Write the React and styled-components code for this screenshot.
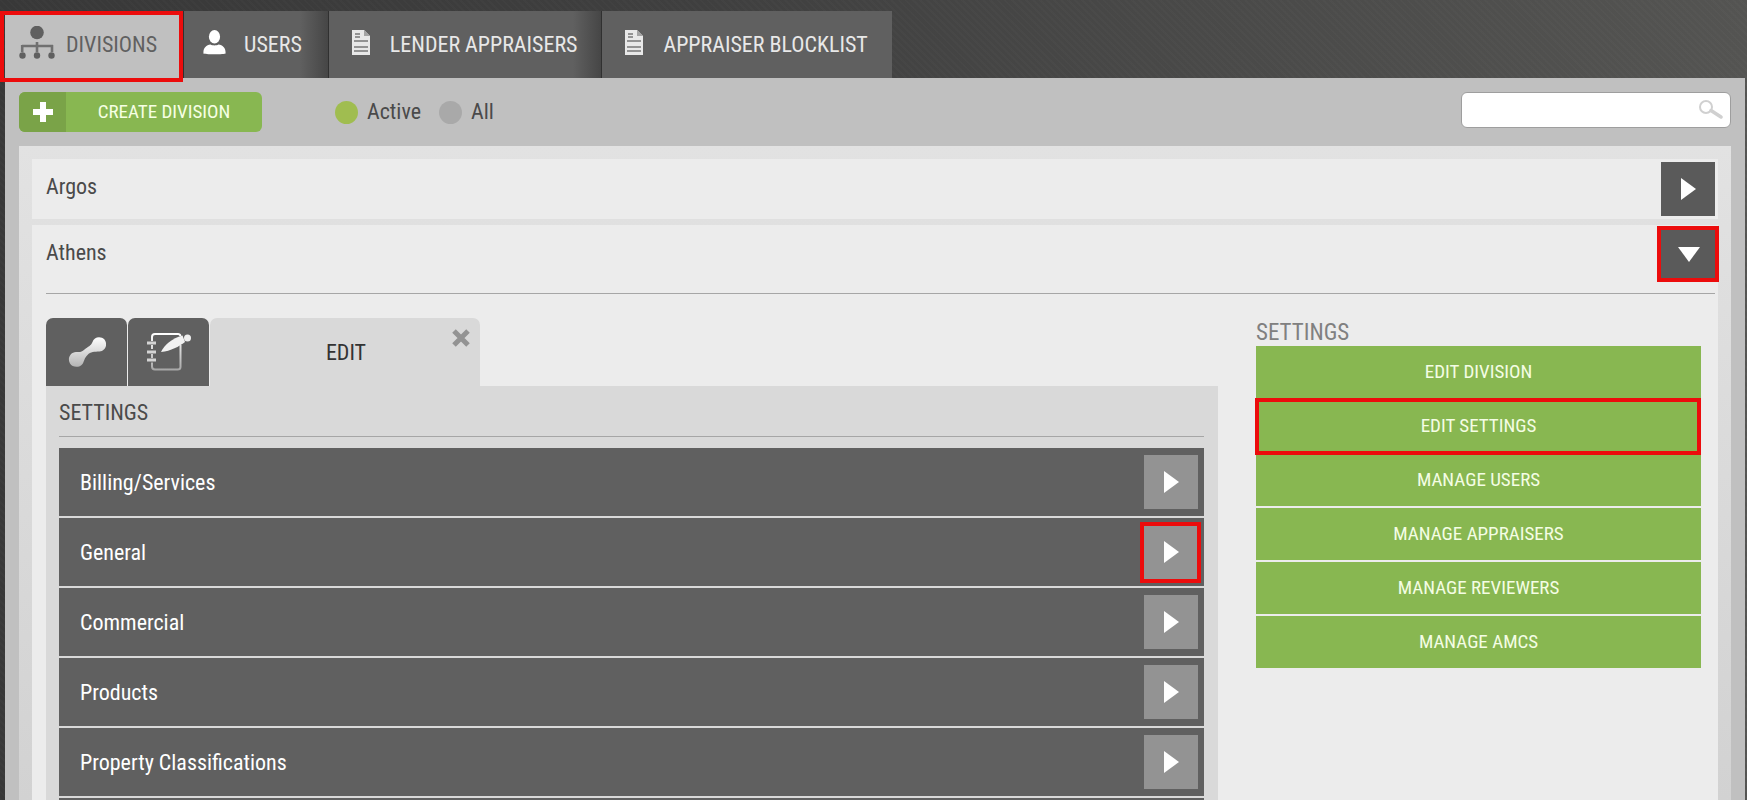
import React, { useState } from "react";
import styled, { createGlobalStyle, css } from "styled-components";

const GlobalStyle = createGlobalStyle`
  *, *::before, *::after { box-sizing: border-box; }
  body {
    margin: 0;
    background: #3a3a3a;
    font-family: "Roboto Condensed", "Liberation Sans Narrow", Roboto, sans-serif;
    font-size: 22px;
    line-height: 28px;
    color: #4a4a4a;
  }
  button, input { font: inherit; }
  button { border: 0; padding: 0; cursor: pointer; }
  h2 { margin: 0; font-weight: 400; }
`;

const highlight = css`
  position: relative;
  &::after {
    content: "";
    position: absolute;
    inset: ${(p) => p.$ring || "-4px"};
    border: 4px solid #ec0c0c;
    pointer-events: none;
    z-index: 2;
  }
`;

const Page = styled.div`
  display: flex;
  flex-direction: column;
  height: 100vh;
  overflow: hidden;
  padding: 11px 2px 0 5px;
  background:
    repeating-linear-gradient(45deg, rgba(255, 255, 255, 0.015) 0 2px, transparent 2px 5px),
    linear-gradient(90deg, #383838, #3f3f3f 40%, #545452);
`;

const Tabs = styled.nav`
  display: flex;
  height: 67px;
  flex: none;
`;

const Tab = styled.button`
  display: flex;
  align-items: center;
  gap: 20px;
  padding: 0 24px 0 23px;
  color: #e8e8e8;
  background: ${(p) => (p.$shade ? "linear-gradient(90deg, #606060 calc(100% - 28px), #464646)" : "#606060")};
  border-left: 1px solid #303030;
  white-space: nowrap;
  ${(p) =>
    p.$compact &&
    css`
      gap: 18px;
      padding: 0 26px 0 19px;
    `}
  ${(p) =>
    p.$active &&
    css`
      ${highlight}
      color: #606060;
      background: #c0c0c0;
      border-left: 0;
      padding: 0 26px 0 14px;
      gap: 11px;
    `}
  svg { flex: none; margin-bottom: 4px; }
`;

const Shell = styled.main`
  display: flex;
  flex-direction: column;
  flex: 1;
  min-height: 0;
  padding: 14px 14px 0;
  background: #c0c0c0;
`;

const Toolbar = styled.div`
  display: flex;
  align-items: flex-start;
  height: 54px;
  flex: none;
`;

const CreateButton = styled.button`
  display: flex;
  width: 243px;
  height: 40px;
  border-radius: 6px;
  overflow: hidden;
  color: #f6ffe4;
  background: #88b751;
  font-size: 19px;
  line-height: 40px;
`;

const CreateIcon = styled.span`
  display: flex;
  align-items: center;
  justify-content: center;
  width: 47px;
  height: 40px;
  background: #7aa348;
`;

const CreateLabel = styled.span`
  flex: 1;
`;

const Filters = styled.div`
  display: flex;
  gap: 18px;
  margin-left: 73px;
`;

const FilterLabel = styled.label`
  display: flex;
  align-items: center;
  gap: 9px;
  height: 40px;
`;

const Radio = styled.input`
  appearance: none;
  width: 23px;
  height: 23px;
  margin: 0;
  border-radius: 50%;
  background: #a9a9a9;
  &:checked { background: #a0bd50; }
`;

const SearchBox = styled.div`
  display: flex;
  align-items: center;
  width: 270px;
  height: 36px;
  margin-left: auto;
  padding-right: 7px;
  border: 1px solid #9e9e9e;
  border-radius: 6px;
  background: #fff;
`;

const SearchInput = styled.input`
  flex: 1;
  min-width: 0;
  height: 100%;
  padding: 0 8px;
  border: 0;
  outline: 0;
  background: transparent;
`;

const Panel = styled.div`
  display: flex;
  flex-direction: column;
  flex: 1;
  gap: 6px;
  min-height: 0;
  padding: 13px 13px 0;
  background: linear-gradient(#e2e2e2, #d2d2d2);
`;

const Division = styled.section`
  flex: ${(p) => (p.$open ? "1" : "none")};
  min-height: 0;
  padding: 3px 3px 3px 14px;
  background: #ececec;
`;

const DivisionHead = styled.div`
  display: flex;
  justify-content: space-between;
  height: ${(p) => (p.$open ? "66px" : "54px")};
  border-bottom: ${(p) => (p.$open ? "1px solid #a6a6a6" : "0")};
`;

const DivisionName = styled.span`
  padding-top: 11px;
`;

const ArrowButton = styled.button`
  display: flex;
  align-items: center;
  justify-content: center;
  flex: none;
  width: 54px;
  height: 54px;
  color: #fff;
  background: ${(p) => (p.$light ? "#939393" : "#5a5a5a")};
  ${(p) => p.$marked && highlight}
`;

const Columns = styled.div`
  display: grid;
  grid-template-columns: minmax(0, 1172fr) minmax(0, 445fr);
  gap: 38px;
  padding: 24px 14px 0 0;
`;

const SubTabs = styled.div`
  display: flex;
  gap: 1px;
  height: 68px;
`;

const IconTab = styled.button`
  display: flex;
  align-items: center;
  justify-content: center;
  width: 81px;
  border-radius: 7px 7px 0 0;
  background: #606060;
`;

const EditTab = styled.div`
  display: grid;
  grid-template-columns: 40px 1fr 38px;
  width: 270px;
  border-radius: 7px 7px 0 0;
  background: #d9d9d9;
  color: #333;
  text-align: center;
  line-height: 70px;
`;

const EditLabel = styled.span`
  grid-column: 2;
`;

const CloseButton = styled.button`
  display: flex;
  align-items: center;
  justify-content: center;
  width: 38px;
  height: 40px;
  background: transparent;
`;

const SettingsPanel = styled.div`
  padding: 12px 14px 0 13px;
  background: #d9d9d9;
`;

const PanelTitle = styled.h2`
  height: 39px;
  margin-bottom: 11px;
  border-bottom: 1px solid #a6a6a6;
  font-size: 22px;
  line-height: 30px;
`;

const Rows = styled.div`
  display: flex;
  flex-direction: column;
  gap: 2px;
`;

const Row = styled.div`
  display: flex;
  align-items: center;
  justify-content: space-between;
  height: 68px;
  padding: 0 6px 0 21px;
  background: #606060;
  color: #fff;
`;

const RowLabel = styled.span`
  padding-top: 1px;
`;

const SideTitle = styled.h2`
  padding-top: 1px;
  color: #808080;
  font-size: 23px;
  line-height: 27px;
`;

const Actions = styled.div`
  display: flex;
  flex-direction: column;
  gap: 2px;
`;

const ActionButton = styled.button`
  height: 52px;
  color: #f4fde4;
  background: #88b751;
  font-size: 19px;
  ${(p) => p.$marked && highlight}
`;

const Divisions = () => (
  <svg width="36" height="34" viewBox="0 0 36 34" fill="#606060">
    <circle cx="18" cy="6.5" r="6.8" />
    <path d="M3 20h31M3.2 19v7M18 16v10M33 19v7" stroke="#707070" strokeWidth="2.6" fill="none" />
    <circle cx="3.5" cy="29.5" r="3.2" />
    <circle cx="18" cy="29.5" r="3.2" />
    <circle cx="32.5" cy="29.5" r="3.2" />
  </svg>
);

const User = () => (
  <svg width="23" height="25" viewBox="0 0 23 25" fill="#fff">
    <ellipse cx="11.5" cy="6.8" rx="5.6" ry="6.8" />
    <path d="M.5 23.5c-.6-5 2.5-8.5 7-9 2 1.2 6 1.2 8 0 4.5.5 7.6 4 7 9 0 1-22 1-22 0z" />
  </svg>
);

const Doc = () => (
  <svg width="18" height="25" viewBox="0 0 18 25">
    <path d="M0 0h12l6 6v19H0z" fill="#e8e8e8" />
    <path d="M12 0v6h6z" fill="#a4a4a4" />
    <path d="M3 4h5M3 7h5M2 11h14M2 17h14M2 21h14" stroke="#777" strokeWidth="1.5" />
  </svg>
);

const Plus = () => (
  <svg width="20" height="20" viewBox="0 0 20 20">
    <path d="M10 0v20M0 10h20" stroke="#fff" strokeWidth="6" />
  </svg>
);

const Magnifier = () => (
  <svg width="25" height="20" viewBox="0 0 25 20" fill="none" stroke="#d0d0d0">
    <circle cx="8" cy="7" r="6" strokeWidth="2" />
    <path d="M13 10.5l10 6.5" strokeWidth="3.5" strokeLinecap="round" />
  </svg>
);

const Arrow = ({ down }) =>
  down ? (
    <svg width="24" height="16" viewBox="0 0 24 16" fill="currentColor"><path d="M2 0h22L13 15z" /></svg>
  ) : (
    <svg width="15" height="22" viewBox="0 0 15 22" fill="currentColor"><path d="M0 0l15 11L0 22z" /></svg>
  );

const Link = () => (
  <svg width="38" height="30" viewBox="0 0 38 30">
    <defs>
      <linearGradient id="fade" x1="0" y1="0" x2="0" y2="1">
        <stop offset="0" stopColor="#fff" />
        <stop offset="1" stopColor="#b4b4b4" />
      </linearGradient>
    </defs>
    <path
      d="M24.500 5C26-.5 33-1.200 36.500 2.500c3.500 4.500 1 11.500-5 12-5 .3-9 0-12 3.500-3.500 3.500-3 6-5 9-3 4-10 3.700-12.500-.5-3-5 .5-11.500 6-11.500 4 0 5.500.5 8.500-2.500C20 9.500 23 9 24.500 5z"
      fill="url(#fade)"
    />
  </svg>
);

const Notebook = () => (
  <svg width="44" height="38" viewBox="0 0 44 38" fill="none">
    <defs>
      <linearGradient id="page" x1="0" y1="0" x2="0" y2="1">
        <stop offset="0" stopColor="#fff" />
        <stop offset="1" stopColor="#a8a8a8" />
      </linearGradient>
    </defs>
    <path d="M5 8V4q0-3 3-3h23q2 0 2.500 2M33.500 12v22q0 2.500-3 2.500H8q-3 0-3-3v-4M5 12v4M5 21v4" stroke="url(#page)" strokeWidth="2" />
    <path d="M0 10h9M0 19h9M0 27h9" stroke="#d4d4d4" strokeWidth="3" />
    <path d="M14 19C17 12 25 5.500 35.500 2.500l2.500 6.500c-6 4.500-14 9-24 10z" fill="#f2f2f2" />
    <circle cx="40.5" cy="5" r="3.5" fill="#eee" />
  </svg>
);

const Close = () => (
  <svg width="18" height="18" viewBox="0 0 18 18">
    <path d="M2 2l14 14M16 2L2 16" stroke="#939393" strokeWidth="5" />
  </svg>
);

const settings = ["Billing/Services", "General", "Commercial", "Products", "Property Classifications"];
const actions = [
  "EDIT DIVISION",
  "EDIT SETTINGS",
  "MANAGE USERS",
  "MANAGE APPRAISERS",
  "MANAGE REVIEWERS",
  "MANAGE AMCS",
];

export default function App() {
  const [filter, setFilter] = useState("Active");
  return (
    <Page>
      <GlobalStyle />
      <Tabs>
        <Tab $active $ring="0 0 -4px -5px"><Divisions />DIVISIONS</Tab>
        <Tab $shade $compact><User />USERS</Tab>
        <Tab $shade><Doc />LENDER APPRAISERS</Tab>
        <Tab><Doc />APPRAISER BLOCKLIST</Tab>
      </Tabs>
      <Shell>
        <Toolbar>
          <CreateButton>
            <CreateIcon><Plus /></CreateIcon>
            <CreateLabel>CREATE DIVISION</CreateLabel>
          </CreateButton>
          <Filters>
            {["Active", "All"].map((name) => (
              <FilterLabel key={name}>
                <Radio type="radio" name="filter" checked={filter === name} onChange={() => setFilter(name)} />
                {name}
              </FilterLabel>
            ))}
          </Filters>
          <SearchBox>
            <SearchInput type="text" aria-label="Search" />
            <Magnifier />
          </SearchBox>
        </Toolbar>
        <Panel>
          <Division>
            <DivisionHead>
              <DivisionName>Argos</DivisionName>
              <ArrowButton aria-label="Expand Argos"><Arrow /></ArrowButton>
            </DivisionHead>
          </Division>
          <Division $open>
            <DivisionHead $open>
              <DivisionName>Athens</DivisionName>
              <ArrowButton $marked $ring="-2px -4px 0" aria-label="Collapse Athens"><Arrow down /></ArrowButton>
            </DivisionHead>
            <Columns>
              <div>
                <SubTabs>
                  <IconTab aria-label="Connections"><Link /></IconTab>
                  <IconTab aria-label="Notes"><Notebook /></IconTab>
                  <EditTab>
                    <EditLabel>EDIT</EditLabel>
                    <CloseButton aria-label="Close"><Close /></CloseButton>
                  </EditTab>
                </SubTabs>
                <SettingsPanel>
                  <PanelTitle>SETTINGS</PanelTitle>
                  <Rows>
                    {settings.map((name) => (
                      <Row key={name}>
                        <RowLabel>{name}</RowLabel>
                        <ArrowButton
                          $light
                          $marked={name === "General"}
                          $ring="-3px -3px -4px -4px"
                          aria-label={`Open ${name}`}
                        >
                          <Arrow />
                        </ArrowButton>
                      </Row>
                    ))}
                    <Row />
                  </Rows>
                </SettingsPanel>
              </div>
              <div>
                <SideTitle>SETTINGS</SideTitle>
                <Actions>
                  {actions.map((name) => (
                    <ActionButton key={name} $marked={name === "EDIT SETTINGS"} $ring="-2px 0 -3px -1px">{name}</ActionButton>
                  ))}
                </Actions>
              </div>
            </Columns>
          </Division>
        </Panel>
      </Shell>
    </Page>
  );
}
